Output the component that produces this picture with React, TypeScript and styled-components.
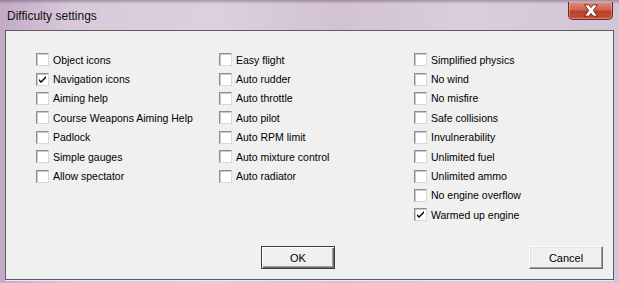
import styled, { createGlobalStyle } from "styled-components";

const GlobalStyle = createGlobalStyle`
  html, body {
    margin: 0;
    padding: 0;
    background: #cbb8cd;
  }
  * { box-sizing: border-box; }
`;

const Frame = styled.div`
  width: 619px;
  height: 283px;
  display: flex;
  flex-direction: column;
  padding: 0 5px 3px 5px;
  background:
    linear-gradient(180deg, rgba(60, 40, 60, 0.35) 0px, rgba(60, 40, 60, 0) 4px),
    linear-gradient(90deg, #c3aac6 0%, #d9cadb 12%, #dccfde 35%, #d2c2d4 55%, #dbcddd 75%, #d3c4d6 100%);
`;

const TitleBar = styled.div`
  height: 30px;
  display: flex;
  align-items: flex-start;
  justify-content: space-between;
`;

const Title = styled.span`
  font-family: "Liberation Sans", Arial, sans-serif;
  font-size: 12px;
  color: #111;
  margin: 9px 0 0 2px;
`;

const CloseButton = styled.div`
  width: 45px;
  height: 18px;
  margin-top: 2px;
  margin-right: 1px;
  border: 1px solid #6b2a22;
  border-top: none;
  border-radius: 0 0 5px 5px;
  background: linear-gradient(180deg, #e08e7c 0%, #cf6450 45%, #bc3f28 55%, #c85238 100%);
  box-shadow: inset 0 0 0 1px rgba(255, 200, 190, 0.4);
  display: flex;
  align-items: center;
  justify-content: center;
`;

const Client = styled.div`
  flex: 1;
  display: flex;
  flex-direction: column;
  background: #f0f0f0;
  border: 1px solid #5d5d5d;
  box-shadow: 0 1px 0 #ece6ed;
`;

const Columns = styled.div`
  display: grid;
  grid-template-columns: 183px 195px 1fr;
  padding: 19px 0 0 30px;
`;

const Column = styled.div`
  display: flex;
  flex-direction: column;
`;

const Row = styled.label`
  height: 19.4px;
  display: flex;
  align-items: center;
  font-family: "Liberation Sans", Arial, sans-serif;
  font-size: 10.5px;
  color: #000;
  white-space: nowrap;
`;

const Box = styled.span`
  width: 13px;
  height: 13px;
  margin-right: 4px;
  flex: none;
  background: #fff;
  border: 1px solid;
  border-color: #8e8e8e #d8d8d8 #d8d8d8 #8e8e8e;
  box-shadow: inset 1px 1px 0 #c9c9c9;
  display: flex;
  align-items: center;
  justify-content: center;
`;

const Footer = styled.div`
  margin-top: auto;
  display: flex;
  padding: 0 10px 10px 255px;
`;

const Button = styled.div<{ $default?: boolean }>`
  width: 74px;
  height: 23px;
  display: flex;
  align-items: center;
  justify-content: center;
  font-family: "Liberation Sans", Arial, sans-serif;
  font-size: 11px;
  color: #000;
  background: #f0f0f0;
  border: 1px solid ${(p) => (p.$default ? "#3c3c3c" : "#fff")};
  ${(p) => (p.$default ? "" : "border-right-color: #6a6a6a; border-bottom-color: #6a6a6a;")}
  box-shadow: ${(p) =>
    p.$default
      ? "inset 1px 1px 0 #fff, inset -1px -1px 0 #6a6a6a, inset -2px -2px 0 #a0a0a0"
      : "inset -1px -1px 0 #a0a0a0, inset 1px 1px 0 #e3e3e3"};
  & + & {
    margin-left: auto;
  }
`;

const Tick = () => (
  <svg width="9" height="9" viewBox="0 0 9 9">
    <path d="M1 4 L3 6 L8 1 L8 3 L3 8 L1 6 Z" fill="#000" />
  </svg>
);

const CloseGlyph = () => (
  <svg width="18" height="13" viewBox="0 0 18 13">
    <path
      d="M2.5 0.8 L6.8 0.8 L9 3.6 L11.2 0.8 L15.5 0.8 L11.3 6.5 L15.5 12.2 L11.2 12.2 L9 9.4 L6.8 12.2 L2.5 12.2 L6.7 6.5 Z"
      fill="#fff"
      stroke="#5a1a12"
      strokeWidth="0.9"
      strokeLinejoin="round"
    />
  </svg>
);

type Item = { label: string; checked?: boolean };

const columns: Item[][] = [
  [
    { label: "Object icons" },
    { label: "Navigation icons", checked: true },
    { label: "Aiming help" },
    { label: "Course Weapons Aiming Help" },
    { label: "Padlock" },
    { label: "Simple gauges" },
    { label: "Allow spectator" },
  ],
  [
    { label: "Easy flight" },
    { label: "Auto rudder" },
    { label: "Auto throttle" },
    { label: "Auto pilot" },
    { label: "Auto RPM limit" },
    { label: "Auto mixture control" },
    { label: "Auto radiator" },
  ],
  [
    { label: "Simplified physics" },
    { label: "No wind" },
    { label: "No misfire" },
    { label: "Safe collisions" },
    { label: "Invulnerability" },
    { label: "Unlimited fuel" },
    { label: "Unlimited ammo" },
    { label: "No engine overflow" },
    { label: "Warmed up engine", checked: true },
  ],
];

export default function App() {
  return (
    <>
      <GlobalStyle />
      <Frame>
        <TitleBar>
          <Title>Difficulty settings</Title>
          <CloseButton>
            <CloseGlyph />
          </CloseButton>
        </TitleBar>
        <Client>
          <Columns>
            {columns.map((col, i) => (
              <Column key={i}>
                {col.map((item) => (
                  <Row key={item.label}>
                    <Box>{item.checked && <Tick />}</Box>
                    {item.label}
                  </Row>
                ))}
              </Column>
            ))}
          </Columns>
          <Footer>
            <Button $default>OK</Button>
            <Button>Cancel</Button>
          </Footer>
        </Client>
      </Frame>
    </>
  );
}
